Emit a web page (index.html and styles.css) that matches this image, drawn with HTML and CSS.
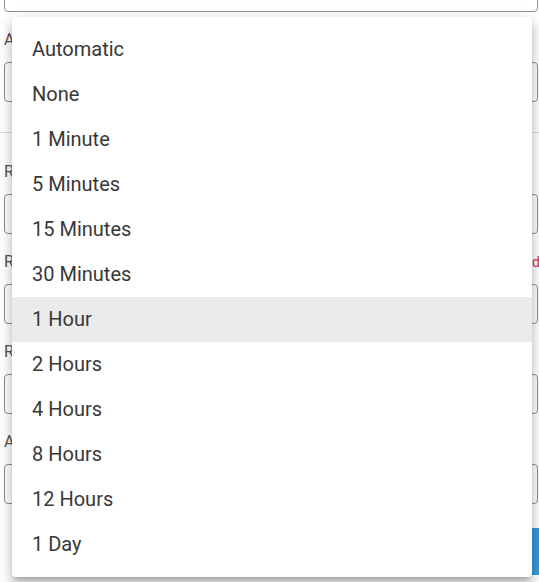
FILE: index.html
```html
<!DOCTYPE html>
<html lang="en">
<head>
  <meta charset="UTF-8">
  <meta name="viewport" content="width=device-width, initial-scale=1.0">
  <title>Refresh Settings</title>
  <link rel="stylesheet" href="styles.css">
</head>
<body>
  <div class="dialog">
    <div class="input top-input"></div>

    <div class="field">
      <label class="label">Auto Refresh</label>
      <div class="input"></div>
    </div>

    <div class="divider"></div>

    <div class="field">
      <label class="label">Refresh Interval</label>
      <div class="input"></div>
    </div>
    <div class="field">
      <div class="label-row">
        <label class="label">Range Start</label>
        <span class="error">Required</span>
      </div>
      <div class="input"></div>
    </div>
    <div class="field">
      <label class="label">Range End</label>
      <div class="input"></div>
    </div>
    <div class="field">
      <label class="label">Alignment</label>
      <div class="input"></div>
    </div>

    <div class="footer">
      <button class="save-button">Save</button>
    </div>
  </div>

  <!-- Interval menu -->
  <ul class="menu">
    <li>Automatic</li>
    <li>None</li>
    <li>1 Minute</li>
    <li>5 Minutes</li>
    <li>15 Minutes</li>
    <li>30 Minutes</li>
    <li class="active">1 Hour</li>
    <li>2 Hours</li>
    <li>4 Hours</li>
    <li>8 Hours</li>
    <li>12 Hours</li>
    <li>1 Day</li>
  </ul>
</body>
</html>
```

FILE: styles.css
```css
body {
  margin: 0;
  overflow: hidden;
  background-color: white;
  font-family: Roboto, "Liberation Sans", sans-serif;
  color: #333;
}
.dialog {
  width: 534px;
  padding-left: 4px;
}
.input {
  box-sizing: border-box;
  height: 40px;
  border: 1px solid #8e8e8e;
  border-radius: 4px;
  background-color: white;
}
.top-input {
  margin-top: -28px;
  margin-bottom: 18px;
}
.field {
  margin-bottom: 18px;
}
.label {
  display: block;
  font-size: 16px;
  line-height: 20px;
  color: #5d4f4f;
  margin-bottom: 12px;
}
.label-row {
  display: flex;
  justify-content: space-between;
}
.error {
  font-size: 14px;
  line-height: 20px;
  color: #d32f2f;
  margin-right: -2px;
}
.divider {
  height: 1px;
  background-color: #dcdcdc;
  margin: 30px -4px 29px -4px;
}
.footer {
  display: flex;
  padding-left: 523px;
  margin-top: 24px;
}
.save-button {
  height: 47px;
  min-width: 90px;
  border: none;
  border-radius: 5px;
  background-color: #3a98d8;
  color: white;
  font-family: Roboto, "Liberation Sans", sans-serif;
  font-size: 15px;
}
.menu {
  position: absolute;
  top: 17px;
  left: 12px;
  width: 520px;
  margin: 0;
  padding: 10px 0;
  list-style: none;
  background-color: white;
  border-radius: 4px;
  box-shadow: 0 5px 5px -3px rgba(0, 0, 0, 0.2), 0 8px 10px 1px rgba(0, 0, 0, 0.14), 0 3px 14px 2px rgba(0, 0, 0, 0.12);
}
.menu li {
  height: 45px;
  line-height: 45px;
  padding-left: 20px;
  font-size: 20px;
  color: #383838;
}
.menu li.active {
  background-color: #ebebeb;
}
```
